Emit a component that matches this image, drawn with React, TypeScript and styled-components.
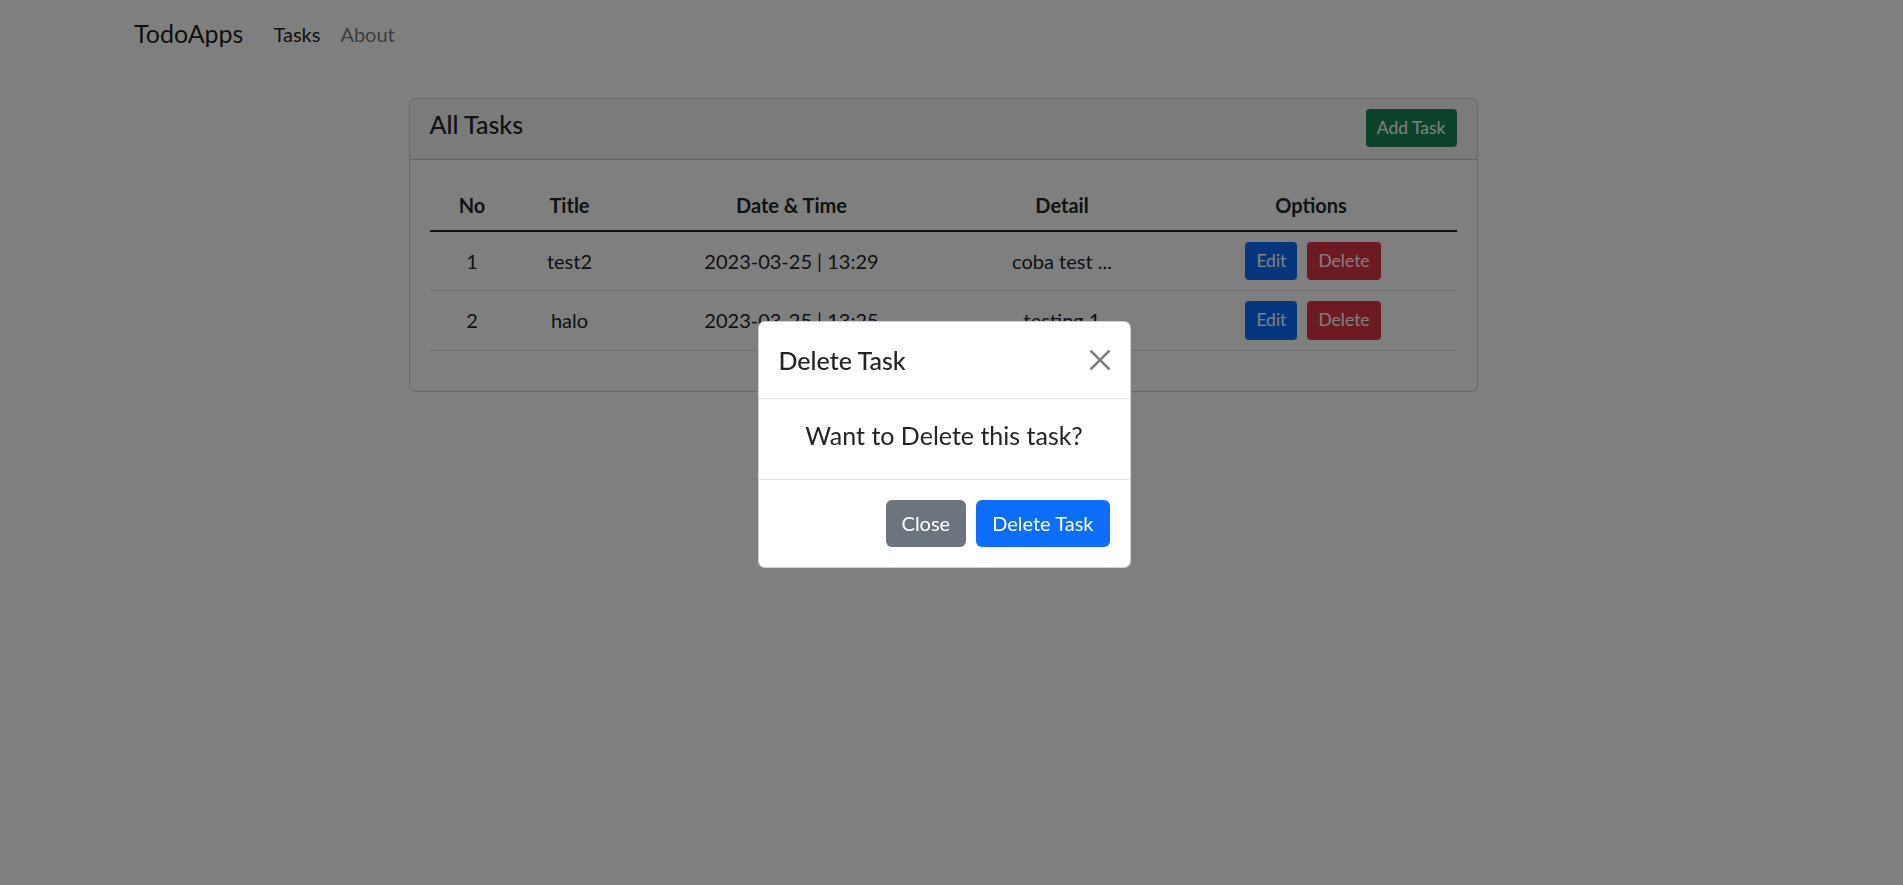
import React from "react";
import styled, { createGlobalStyle } from "styled-components";

const GlobalStyle = createGlobalStyle`
  html, body { margin: 0; padding: 0; }
  body {
    font-family: Lato, "Noto Sans", sans-serif;
    font-size: 20px;
    line-height: 1.5;
    color: #212529;
    background: #fff;
    padding-right: 17px;
    overflow: hidden;
  }
  * { box-sizing: border-box; }
`;

const Navbar = styled.nav`
  height: 68px;
  display: flex;
  align-items: center;
  padding-left: 134px;
`;

const Brand = styled.a`
  font-size: 25px;
  color: rgba(0, 0, 0, 0.9);
  margin-right: 20px;
  text-decoration: none;
`;

const NavLink = styled.a<{ $active?: boolean }>`
  padding: 0 10px;
  font-size: 20px;
  color: ${(p) => (p.$active ? "rgba(0,0,0,0.9)" : "rgba(0,0,0,0.55)")};
  text-decoration: none;
`;

const Main = styled.main`
  padding-top: 30px;
`;

const Card = styled.section`
  width: 1069px;
  margin: 0 auto;
  border: 1px solid rgba(0, 0, 0, 0.175);
  border-radius: 7px;
  background: #fff;
  overflow: hidden;
`;

const CardHeader = styled.header`
  display: flex;
  justify-content: space-between;
  align-items: flex-start;
  padding: 10px 20px;
  background: rgba(0, 0, 0, 0.03);
  border-bottom: 1px solid rgba(0, 0, 0, 0.175);
`;

const CardTitle = styled.h5`
  margin: 0 0 10px;
  font-size: 25px;
  font-weight: 500;
  line-height: 1.2;
`;

const Btn = styled.button<{ $variant: "success" | "primary" | "danger" | "secondary"; $size?: "sm" }>`
  font-family: inherit;
  color: #fff;
  border: 1px solid transparent;
  cursor: pointer;
  font-size: ${(p) => (p.$size === "sm" ? "17.5px" : "20px")};
  line-height: 1.5;
  padding: ${(p) => (p.$size === "sm" ? "5px 10px" : "7.5px 15px")};
  border-radius: ${(p) => (p.$size === "sm" ? "4px" : "6px")};
  background: ${(p) =>
    ({ success: "#198754", primary: "#0d6efd", danger: "#dc3545", secondary: "#6c757d" }[p.$variant])};
`;

const CardBody = styled.div`
  padding: 20px;
`;

const Table = styled.table`
  width: 100%;
  border-collapse: collapse;
  margin-bottom: 20px;
  text-align: center;
  color: #212529;
`;

const Th = styled.th`
  padding: 10px;
  font-weight: 700;
  line-height: 1.5;
  border-bottom: 1px solid #dee2e6;
`;

const TBody = styled.tbody`
  border-top: 2px solid #212529;
`;

const Td = styled.td`
  padding: 10px;
  vertical-align: middle;
  border-bottom: 1px solid #dee2e6;
`;

const Options = styled.div`
  display: flex;
  justify-content: center;
  gap: 10px;
  padding-left: 4px;
`;

const Backdrop = styled.div`
  position: fixed;
  inset: 0;
  background: rgba(0, 0, 0, 0.5);
  display: flex;
  align-items: center;
  justify-content: center;
  padding: 3px 15px 0 0;
`;

const Modal = styled.div`
  width: 373px;
  background: #fff;
  border: 1px solid rgba(0, 0, 0, 0.175);
  border-radius: 7px;
`;

const ModalHeader = styled.div`
  height: 77px;
  display: flex;
  align-items: center;
  justify-content: space-between;
  padding: 0 20px;
  border-bottom: 1px solid #dee2e6;
`;

const ModalTitle = styled.h5`
  margin: 0;
  font-size: 25px;
  font-weight: 500;
  line-height: 1.2;
`;

const CloseX = styled.button`
  width: 20px;
  height: 20px;
  padding: 0;
  border: 0;
  background: transparent;
  opacity: 0.5;
  display: flex;
`;

const ModalBody = styled.div`
  height: 81px;
  display: flex;
  align-items: center;
  justify-content: center;
  padding-bottom: 5px;
  border-bottom: 1px solid #dee2e6;
`;

const BodyText = styled.p`
  margin: 0;
  font-size: 25px;
  font-weight: 400;
`;

const ModalFooter = styled.div`
  display: flex;
  justify-content: flex-end;
  gap: 10px;
  padding: 20px;
`;

const tasks = [
  { no: 1, title: "test2", date: "2023-03-25 | 13:29", detail: "coba test ..." },
  { no: 2, title: "halo", date: "2023-03-25 | 13:25", detail: "testing 1" },
];

const colWidths = [85, 110, 334, 207, 291];

export default function App() {
  return (
    <>
      <GlobalStyle />
      <Navbar>
        <Brand href="#">TodoApps</Brand>
        <NavLink $active href="#">Tasks</NavLink>
        <NavLink href="#">About</NavLink>
      </Navbar>
      <Main>
        <Card>
          <CardHeader>
            <CardTitle>All Tasks</CardTitle>
            <Btn $variant="success" $size="sm">Add Task</Btn>
          </CardHeader>
          <CardBody>
            <Table>
              <colgroup>
                {colWidths.map((w, i) => (
                  <col key={i} style={{ width: w }} />
                ))}
              </colgroup>
              <thead>
                <tr>
                  <Th>No</Th>
                  <Th>Title</Th>
                  <Th>Date &amp; Time</Th>
                  <Th>Detail</Th>
                  <Th>Options</Th>
                </tr>
              </thead>
              <TBody>
                {tasks.map((t) => (
                  <tr key={t.no}>
                    <Td>{t.no}</Td>
                    <Td>{t.title}</Td>
                    <Td>{t.date}</Td>
                    <Td>{t.detail}</Td>
                    <Td>
                      <Options>
                        <Btn $variant="primary" $size="sm">Edit</Btn>
                        <Btn $variant="danger" $size="sm">Delete</Btn>
                      </Options>
                    </Td>
                  </tr>
                ))}
              </TBody>
            </Table>
          </CardBody>
        </Card>
      </Main>
      <Backdrop>
        <Modal>
          <ModalHeader>
            <ModalTitle>Delete Task</ModalTitle>
            <CloseX aria-label="Close">
              <svg width="20" height="20" viewBox="0 0 16 16" fill="#000">
                <path d="M.293.293a1 1 0 0 1 1.414 0L8 6.586 14.293.293a1 1 0 1 1 1.414 1.414L9.414 8l6.293 6.293a1 1 0 0 1-1.414 1.414L8 9.414l-6.293 6.293a1 1 0 0 1-1.414-1.414L6.586 8 .293 1.707a1 1 0 0 1 0-1.414z" />
              </svg>
            </CloseX>
          </ModalHeader>
          <ModalBody>
            <BodyText>Want to Delete this task?</BodyText>
          </ModalBody>
          <ModalFooter>
            <Btn $variant="secondary">Close</Btn>
            <Btn $variant="primary">Delete Task</Btn>
          </ModalFooter>
        </Modal>
      </Backdrop>
    </>
  );
}
